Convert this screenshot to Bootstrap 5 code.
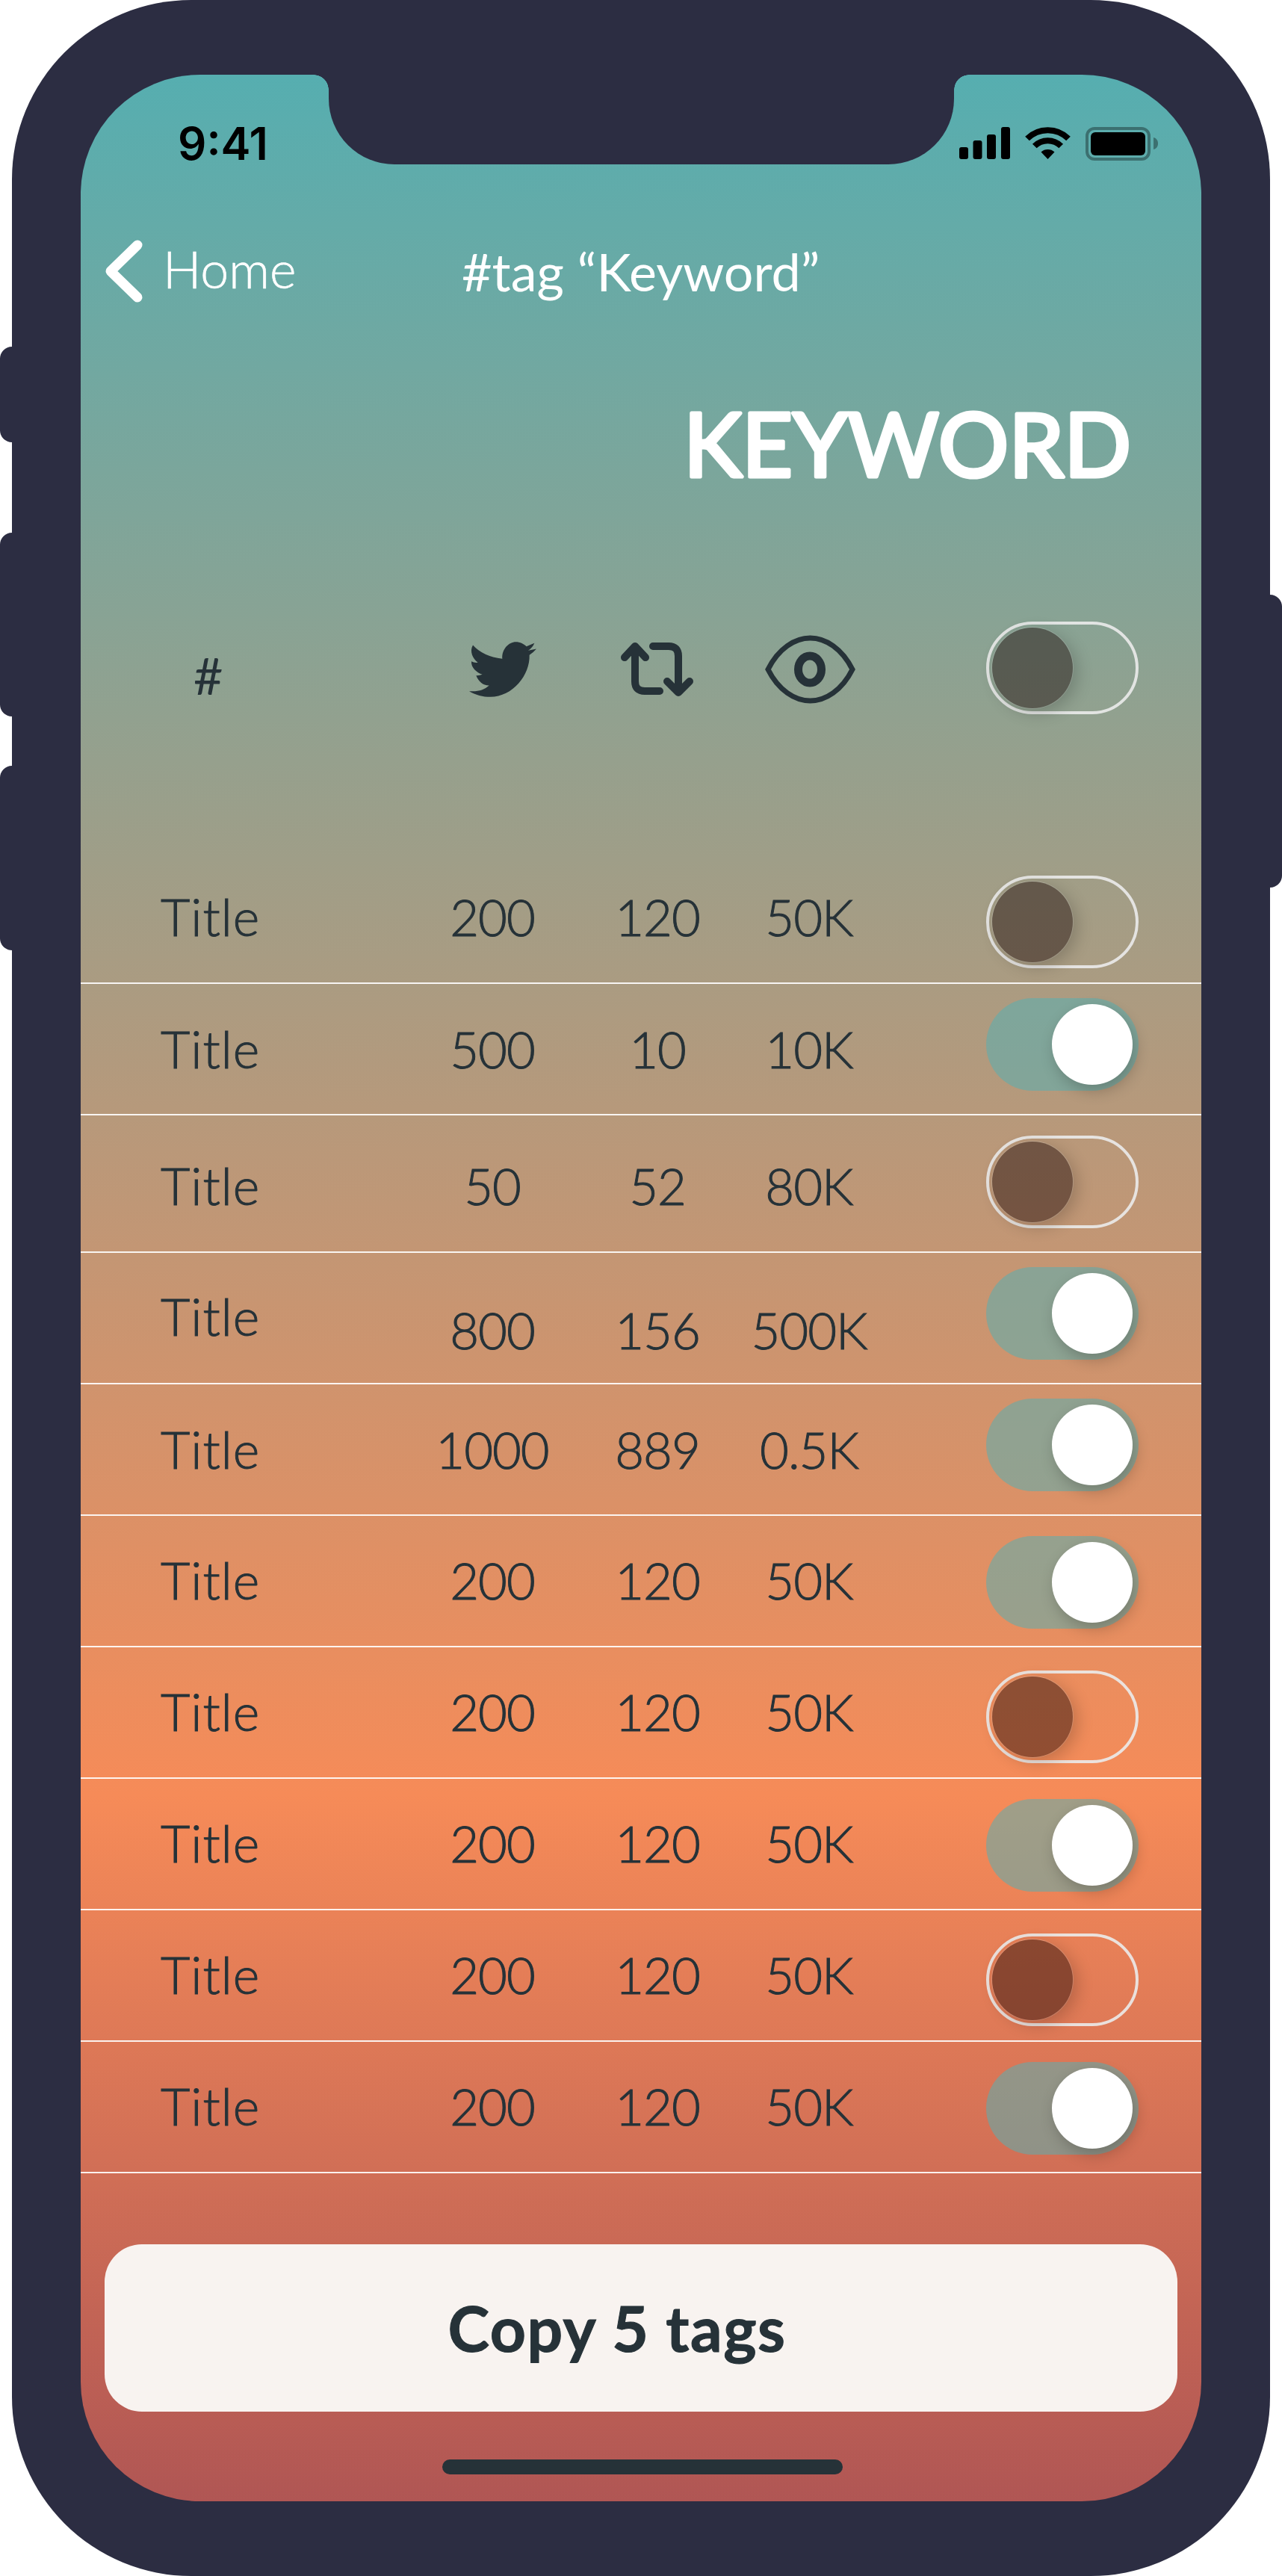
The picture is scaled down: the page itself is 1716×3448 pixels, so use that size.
<!DOCTYPE html>
<html lang="en">
<head>
  <meta charset="UTF-8" />
  <title>Keyword</title>
  <link href="https://cdn.jsdelivr.net/npm/bootstrap@5.3.3/dist/css/bootstrap.min.css" rel="stylesheet">
  <style>
    body {
      background-color: #fff;
      font-family: "Lato", "Liberation Sans", sans-serif;
      color: #263238;
    }
    .phone {
      position: relative;
      margin: 0 16px;
      height: 3448px;
      padding: 100px 92px;
      background-color: #2c2d42;
      border-radius: 240px;
    }
    .side-key {
      position: absolute;
      width: 20px;
      background-color: #2c2d42;
      border-radius: 16px 0 0 16px;
      left: -16px;
    }
    .key-a { top: 464px; height: 128px; }
    .key-b { top: 713px; height: 246px; }
    .key-c { top: 1025px; height: 247px; }
    .key-d { top: 796px; height: 392px; left: auto; right: -16px; border-radius: 0 16px 16px 0; }
    .screen {
      position: relative;
      height: 3248px;
      overflow: hidden;
      border-radius: 160px;
      background: linear-gradient(180deg, #56aeb0 0%, #f68b58 70.9%, #b05654 100%);
    }
    .notch {
      position: absolute;
      top: 0;
      left: 332px;
      width: 837px;
      height: 120px;
      background-color: #2c2d42;
      border-radius: 0 0 88px 88px;
    }
    .notch::before, .notch::after {
      content: "";
      position: absolute;
      top: 0;
      width: 20px;
      height: 20px;
    }
    .notch::before { left: -20px; background: radial-gradient(circle at 0 100%, transparent 19.5px, #2c2d42 20px); }
    .notch::after { right: -20px; background: radial-gradient(circle at 100% 100%, transparent 19.5px, #2c2d42 20px); }

    .status-bar { height: 115px; padding: 70px 58px 0 130px; }
    .status-icons { gap: 20px; }
    .clock { font-family: "Inter", sans-serif; font-weight: 600; font-size: 60px; line-height: 45px; color: #000; }

    .top-nav { height: 86px; margin-top: 105px; color: #fff; }
    .back-cell { width: 510px; padding-left: 32px; gap: 26px; font-size: 68px; font-weight: 300; -webkit-text-stroke: .6px #fff; }
    .back-cell span { margin-top: -6px; }
    .nav-tag { font-size: 70px; font-weight: 400; }
    .kw-title { display: block; margin: 123px 49px 0 auto; overflow: visible; }
    .kw-title text { font-family: "Lato", sans-serif; font-size: 118px; font-weight: 400; fill: #fff; stroke: #fff; stroke-width: 5px; stroke-linejoin: round; }

    .col-name { width: 441px; padding-left: 107px; font-size: 68px; font-weight: 300; line-height: 68px; letter-spacing: 1px; -webkit-text-stroke: 1px #263238; }
    .col-num { text-align: center; font-size: 67px; font-weight: 300; line-height: 68px; letter-spacing: -1px; -webkit-text-stroke: 1px #263238; }
    .c1 { width: 220px; }
    .c2 { width: 222px; }
    .c3 { width: 184px; }

    .head-row { height: 124px; margin-top: 178px; }
    .head-row .col-name { padding-left: 151px; margin-top: 20px; font-weight: 400; -webkit-text-stroke: 0; }
    .ic-cell { margin-top: 4px; }
    .head-row .c1 { padding-left: 28px; }
    .head-row .c3 { padding-left: 2px; }

    .sw {
      display: flex;
      align-items: center;
      width: 204px;
      height: 124px;
      margin-left: auto;
      margin-right: 84px;
      border-radius: 62px;
      flex-shrink: 0;
    }
    .sw-on { justify-content: flex-end; padding: 8px; background-color: rgba(90, 174, 176, .55); }
    .sw-off { justify-content: flex-start; padding: 4px; border: 4px solid rgba(235, 235, 235, .9); }
    .knob { width: 108px; height: 108px; border-radius: 50%; }
    .sw-on .knob { background-color: #fff; box-shadow: 4px 8px 20px rgba(0, 0, 0, .22); }
    .sw-off .knob { background-color: rgba(20, 0, 0, .44); box-shadow: 6px 6px 22px rgba(0, 0, 0, .2), 0 0 0 1px rgba(255, 255, 255, .2); }

    .tag-rows { margin-top: 185px; }
    .tag-row {
      height: 176px;
      border-bottom: 2px solid rgba(255, 255, 255, .9);
      --tx: 52px;
      --sw-top: 27px;
    }
    .tag-row .col-name { margin-top: var(--ti, var(--tx)); }
    .tag-row .col-num { margin-top: var(--tx); }
    .tag-row .sw { margin-top: var(--sw-top); }
    .tag-row:nth-child(1) { --sw-top: 31px; }
    .tag-row:nth-child(2) { --sw-top: 19px; --tx: 53px; }
    .tag-row:nth-child(3) { height: 184px; --tx: 60px; }
    .tag-row:nth-child(4) { --sw-top: 19px; --tx: 69px; --ti: 51px; }
    .tag-row:nth-child(5) { --sw-top: 19px; --tx: 53px; }
    .tag-row:nth-child(7) { --sw-top: 31px; }
    .tag-row:nth-child(9) { --sw-top: 31px; }

    .copy-btn {
      display: block;
      width: 1436px;
      height: 224px;
      margin: 95px 0 0 32px;
      padding: 0 64px 0 0;
      border: 0;
      border-radius: 50px;
      background-color: #f8f3f0;
      color: #263238;
      font-family: "Lato", sans-serif;
      font-size: 84px;
      font-weight: 700;
      letter-spacing: 1.500px;
      -webkit-text-stroke: 1px #263238;
    }
    .home-bar { width: 536px; height: 20px; margin: 64px 0 0 484px; border-radius: 10px; background-color: #263238; }
  </style>
</head>
<body>
  <div class="phone">
    <span class="side-key key-a"></span>
    <span class="side-key key-b"></span>
    <span class="side-key key-c"></span>
    <span class="side-key key-d"></span>

    <div class="screen">
      <div class="notch"></div>

      <div class="status-bar d-flex align-items-start justify-content-between">
        <span class="clock">9:41</span>
        <div class="status-icons d-flex align-items-start">
          <svg width="68" height="43" viewBox="0 0 68 43" fill="#000">
            <rect x="0" y="27" width="12" height="16" rx="3"/>
            <rect x="18.500" y="18" width="12" height="25" rx="3"/>
            <rect x="37" y="10" width="12" height="33" rx="3"/>
            <rect x="56" y="0" width="12" height="43" rx="3"/>
          </svg>
          <svg width="61" height="43" viewBox="0 0 61 43" fill="none" stroke="#000">
            <path d="M3 15.500 A39 39 0 0 1 58 15.500" stroke-width="8"/>
            <path d="M12.800 25.500 A25 25 0 0 1 48.200 25.500" stroke-width="8"/>
            <path d="M21.500 33.500 A13.500 13.500 0 0 1 39.500 33.500 L30.500 43 Z" fill="#000" stroke="none"/>
          </svg>
          <svg width="97" height="45" viewBox="0 0 97 45">
            <rect x="2" y="2" width="83" height="41" rx="10" fill="none" stroke="#000" stroke-opacity=".35" stroke-width="4"/>
            <rect x="7" y="7" width="73" height="31" rx="6" fill="#000"/>
            <path d="M91 14 C95 15 97 18 97 22 C97 26 95 29 91 30 Z" fill="#000" fill-opacity=".35"/>
          </svg>
        </div>
      </div>

      <div class="top-nav d-flex align-items-center">
        <div class="back-cell d-flex align-items-center">
          <svg width="52" height="86" viewBox="0 0 52 86" fill="none" stroke="#fff" stroke-width="13" stroke-linecap="round" stroke-linejoin="round">
            <path d="M44 8 L8 43 L44 78"/>
          </svg>
          <span>Home</span>
        </div>
        <span class="nav-tag">#tag “Keyword”</span>
      </div>

      <svg class="kw-title" width="760" height="125" viewBox="0 0 760 125">
        <text x="715" y="109" text-anchor="end">KEYWORD</text>
      </svg>

      <div class="head-row d-flex align-items-center">
        <div class="col-name">#</div>
        <div class="ic-cell c1 text-center">
          <svg width="90" height="74" viewBox="85 57 270 221" fill="#263238">
            <path d="M100 70 Q140 115 218 125 C215 85 245 57 272 57 C290 57 305 65 315 75 L347 62 Q340 80 322 92 L355 85 Q342 100 327 110 C330 190 260 278 170 278 C140 278 110 270 85 255 C120 258 145 250 165 232 C140 232 122 215 113 192 Q125 193 138 188 C115 180 92 160 94 135 Q105 142 120 140 C100 125 85 95 100 70 Z"/>
          </svg>
        </div>
        <div class="ic-cell c2 text-center">
          <svg width="100" height="74" viewBox="830 860 100 74" fill="none" stroke="#263238" stroke-width="10" stroke-linecap="round" stroke-linejoin="round">
            <path d="M836 881 L850 866 L864 881 M850 866 V913 Q850 926 863 926 H883"/>
            <path d="M874 866 H895 Q908 866 908 879 V927 M893 913 L908 928 L923 913"/>
          </svg>
        </div>
        <div class="ic-cell c3 text-center">
          <svg width="121" height="92" viewBox="0 0 121 92" fill="none" stroke="#263238">
            <path d="M4 46 C18 18 40 4 60.500 4 C81 4 103 18 117 46 C103 74 81 88 60.500 88 C40 88 18 74 4 46 Z" stroke-width="7"/>
            <ellipse cx="60" cy="46" rx="15.500" ry="18" stroke-width="11"/>
          </svg>
        </div>
        <div class="sw sw-off"><span class="knob"></span></div>
      </div>

      <div class="tag-rows">
        <div class="tag-row d-flex align-items-start">
          <div class="col-name">Title</div><div class="col-num c1">200</div><div class="col-num c2">120</div><div class="col-num c3">50K</div>
          <div class="sw sw-off"><span class="knob"></span></div>
        </div>
        <div class="tag-row d-flex align-items-start">
          <div class="col-name">Title</div><div class="col-num c1">500</div><div class="col-num c2">10</div><div class="col-num c3">10K</div>
          <div class="sw sw-on"><span class="knob"></span></div>
        </div>
        <div class="tag-row d-flex align-items-start">
          <div class="col-name">Title</div><div class="col-num c1">50</div><div class="col-num c2">52</div><div class="col-num c3">80K</div>
          <div class="sw sw-off"><span class="knob"></span></div>
        </div>
        <div class="tag-row d-flex align-items-start">
          <div class="col-name">Title</div><div class="col-num c1">800</div><div class="col-num c2">156</div><div class="col-num c3">500K</div>
          <div class="sw sw-on"><span class="knob"></span></div>
        </div>
        <div class="tag-row d-flex align-items-start">
          <div class="col-name">Title</div><div class="col-num c1">1000</div><div class="col-num c2">889</div><div class="col-num c3">0.5K</div>
          <div class="sw sw-on"><span class="knob"></span></div>
        </div>
        <div class="tag-row d-flex align-items-start">
          <div class="col-name">Title</div><div class="col-num c1">200</div><div class="col-num c2">120</div><div class="col-num c3">50K</div>
          <div class="sw sw-on"><span class="knob"></span></div>
        </div>
        <div class="tag-row d-flex align-items-start">
          <div class="col-name">Title</div><div class="col-num c1">200</div><div class="col-num c2">120</div><div class="col-num c3">50K</div>
          <div class="sw sw-off"><span class="knob"></span></div>
        </div>
        <div class="tag-row d-flex align-items-start">
          <div class="col-name">Title</div><div class="col-num c1">200</div><div class="col-num c2">120</div><div class="col-num c3">50K</div>
          <div class="sw sw-on"><span class="knob"></span></div>
        </div>
        <div class="tag-row d-flex align-items-start">
          <div class="col-name">Title</div><div class="col-num c1">200</div><div class="col-num c2">120</div><div class="col-num c3">50K</div>
          <div class="sw sw-off"><span class="knob"></span></div>
        </div>
        <div class="tag-row d-flex align-items-start">
          <div class="col-name">Title</div><div class="col-num c1">200</div><div class="col-num c2">120</div><div class="col-num c3">50K</div>
          <div class="sw sw-on"><span class="knob"></span></div>
        </div>
      </div>

      <button class="btn copy-btn" type="button">Copy 5 tags</button>
      <div class="home-bar"></div>
    </div>
  </div>

  <script src="https://cdn.jsdelivr.net/npm/bootstrap@5.3.3/dist/js/bootstrap.bundle.min.js"></script>
</body>
</html>
